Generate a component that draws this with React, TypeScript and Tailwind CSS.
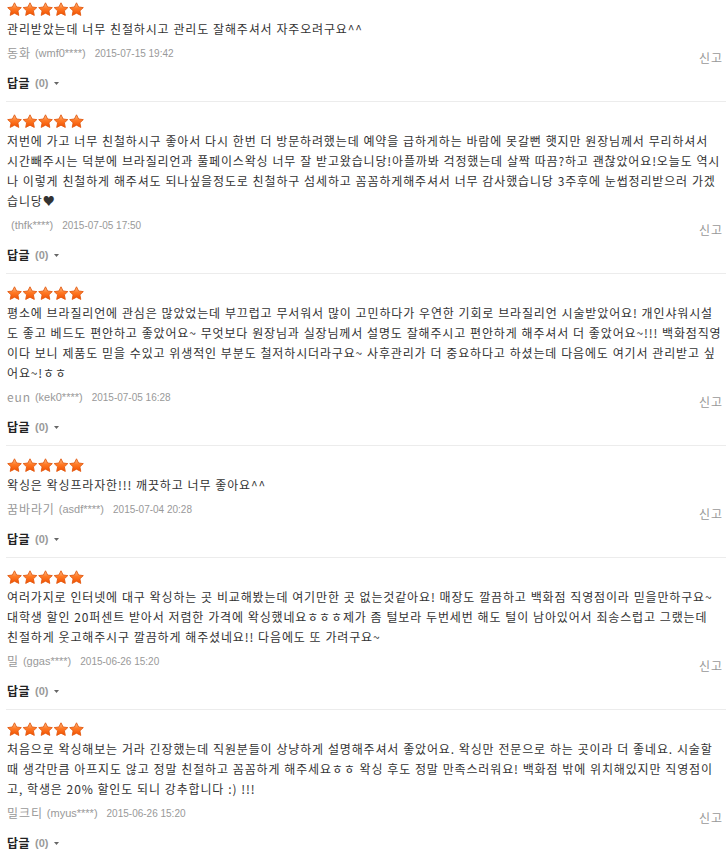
import React from 'react'

type Review = {
  lines: string[]
  name: string
  userId: string
  date: string
}

const reviews: Review[] = [
  {
    lines: ['관리받았는데 너무 친절하시고 관리도 잘해주셔서 자주오려구요^^'],
    name: '동화',
    userId: '(wmf0****)',
    date: '2015-07-15 19:42',
  },
  {
    lines: [
      '저번에 가고 너무 친철하시구 좋아서 다시 한번 더 방문하려했는데 예약을 급하게하는 바람에 못갈뻔 햇지만 원장님께서 무리하셔서',
      '시간빼주시는 덕분에 브라질리언과 풀페이스왁싱 너무 잘 받고왔습니당!아플까봐 걱정했는데 살짝 따끔?하고 괜찮았어요!오늘도 역시',
      '나 이렇게 친철하게 해주셔도 되나싶을정도로 친철하구 섬세하고 꼼꼼하게해주셔서 너무 감사했습니당 3주후에 눈썹정리받으러 가겠',
      '습니당♥',
    ],
    name: '',
    userId: '(thfk****)',
    date: '2015-07-05 17:50',
  },
  {
    lines: [
      '평소에 브라질리언에 관심은 많았었는데 부끄럽고 무서워서 많이 고민하다가 우연한 기회로 브라질리언 시술받았어요! 개인샤워시설',
      '도 좋고 베드도 편안하고 좋았어요~ 무엇보다 원장님과 실장님께서 설명도 잘해주시고 편안하게 해주셔서 더 좋았어요~!!! 백화점직영',
      '이다 보니 제품도 믿을 수있고 위생적인 부분도 철저하시더라구요~ 사후관리가 더 중요하다고 하셨는데 다음에도 여기서 관리받고 싶',
      '어요~!ㅎㅎ',
    ],
    name: 'eun',
    userId: '(kek0****)',
    date: '2015-07-05 16:28',
  },
  {
    lines: ['왁싱은 왁싱프라자한!!! 깨끗하고 너무 좋아요^^'],
    name: '꿈바라기',
    userId: '(asdf****)',
    date: '2015-07-04 20:28',
  },
  {
    lines: [
      '여러가지로 인터넷에 대구 왁싱하는 곳 비교해봤는데 여기만한 곳 없는것같아요! 매장도 깔끔하고 백화점 직영점이라 믿을만하구요~',
      '대학생 할인 20퍼센트 받아서 저렴한 가격에 왁싱했네요ㅎㅎㅎ제가 좀 털보라 두번세번 해도 털이 남아있어서 죄송스럽고 그랬는데',
      '친절하게 웃고해주시구 깔끔하게 해주셨네요!! 다음에도 또 가려구요~',
    ],
    name: '밀',
    userId: '(ggas****)',
    date: '2015-06-26 15:20',
  },
  {
    lines: [
      '처음으로 왁싱해보는 거라 긴장했는데 직원분들이 상냥하게 설명해주셔서 좋았어요. 왁싱만 전문으로 하는 곳이라 더 좋네요. 시술할',
      '때 생각만큼 아프지도 않고 정말 친절하고 꼼꼼하게 해주세요ㅎㅎ 왁싱 후도 정말 만족스러워요! 백화점 밖에 위치해있지만 직영점이',
      '고, 학생은 20% 할인도 되니 강추합니다 :) !!!',
    ],
    name: '밀크티',
    userId: '(myus****)',
    date: '2015-06-26 15:20',
  },
]

const STAR =
  'M7.5 0.8 L9.6 5 L14.3 5.6 L10.9 8.8 L11.8 13.4 L7.5 11.2 L3.2 13.4 L4.1 8.8 L0.7 5.6 L5.4 5 Z'

function Stars() {
  return (
    <svg width="80" height="14" viewBox="0 0 80 14" className="block">
      <defs>
        <linearGradient id="starFill" x1="0" y1="0" x2="0" y2="1">
          <stop offset="0" stopColor="#ffc08a" />
          <stop offset="0.45" stopColor="#ff7a26" />
          <stop offset="1" stopColor="#f24f00" />
        </linearGradient>
      </defs>
      {[0, 1, 2, 3, 4].map(i => (
        <path
          key={i}
          d={STAR}
          transform={`translate(${i * 15.5} 0)`}
          fill="url(#starFill)"
          stroke="#e25a12"
          strokeWidth="0.9"
          strokeLinejoin="round"
        />
      ))}
    </svg>
  )
}

function ReviewItem({ review, first }: { review: Review; first: boolean }) {
  return (
    <div
      className={`ml-[6px] border-b border-[#ececec] pl-[1px] pr-[3px] pb-[8px] ${
        first ? 'pt-[2px]' : 'pt-[12px]'
      }`}
    >
      <div className="h-[14px]">
        <Stars />
      </div>

      {/* body */}
      <div className="mt-[3px] text-[12px] leading-[20px] tracking-[0.85px] text-[#333] [word-spacing:0.4px]">
        {review.lines.map((line, i) => (
          <div key={i} className="whitespace-nowrap">
            {line}
          </div>
        ))}
      </div>

      {/* author / report */}
      <div className="mt-[4px] flex h-[20px] items-center justify-between">
        <div className="flex items-center text-[#999]">
          <span className="text-[12px] tracking-[0.9px]">{review.name}</span>
          <span className="ml-[4px] font-['Liberation_Sans',sans-serif] text-[11px]">
            {review.userId}
          </span>
          <span className="ml-[9px] font-['Liberation_Sans',sans-serif] text-[10px]">
            {review.date}
          </span>
        </div>
        <span className="translate-y-[5px] text-[12px] tracking-[0.9px] text-[#999]">신고</span>
      </div>

      {/* reply */}
      <div className="mt-[10px] flex h-[20px] items-center">
        <span className="text-[12px] font-bold tracking-[0.5px] text-[#222]">답글</span>
        <span className="ml-[5px] font-['Liberation_Sans',sans-serif] text-[11px] font-bold text-[#999]">
          (0)
        </span>
        <svg width="5" height="3" viewBox="0 0 5 3" className="ml-[5px] mt-[1px]">
          <path d="M0 0 L5 0 L2.5 3 Z" fill="#666" />
        </svg>
      </div>
    </div>
  )
}

export default function App() {
  return (
    <div className="min-h-screen w-[726px] overflow-hidden bg-white font-['Noto_Sans_CJK_KR','Noto_Sans',sans-serif]">
      {reviews.map((r, i) => (
        <ReviewItem key={i} review={r} first={i === 0} />
      ))}
    </div>
  )
}
